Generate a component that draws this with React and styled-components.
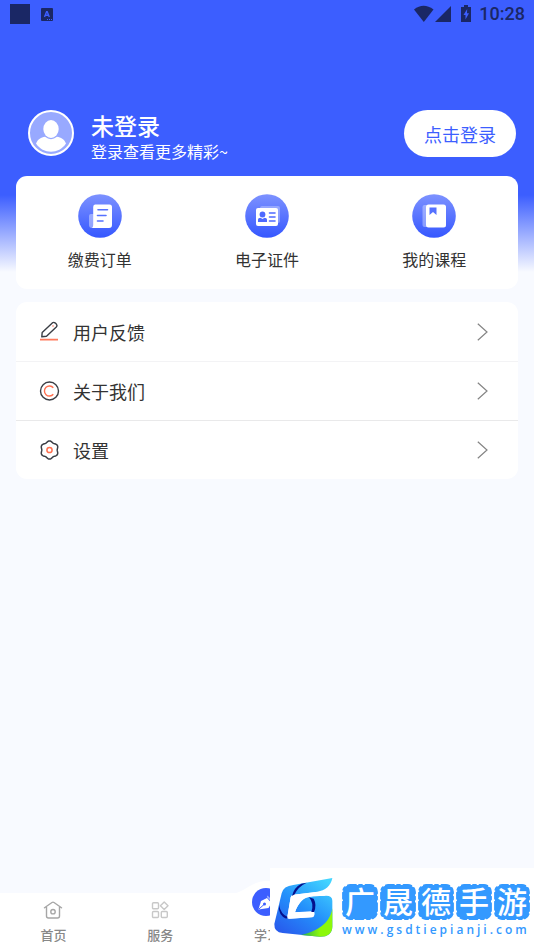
import styled, { createGlobalStyle, css } from 'styled-components'

const GlobalStyle = createGlobalStyle`
  * {
    box-sizing: border-box;
  }

  body {
    margin: 0;
    background-color: #f8faff;
    font-family: "Noto Sans CJK SC", "Noto Sans", sans-serif;
    color: #333;
  }
`

const resetButton = css`
  border: none;
  padding: 0;
  background: none;
  font-family: inherit;
  color: inherit;
  cursor: pointer;
`

// ======================= STYLES =======================

const Page = styled.div`
  display: flex;
  flex-direction: column;
  min-height: 100vh;
  background: linear-gradient(#3c5eff 195px, #f8faff 272px);
`

const StatusBar = styled.div`
  display: flex;
  align-items: center;
  justify-content: space-between;
  height: 28px;
  padding: 0 9px 0 10px;
  color: #1a2765;
`

const StatusGroup = styled.div`
  display: flex;
  align-items: center;
`

const StatusSquare = styled.span`
  width: 20px;
  height: 20px;
  margin-right: 11px;
  background-color: #1a2765;
`

const Clock = styled.time`
  margin-left: 7px;
  font: 500 18px/28px Roboto, sans-serif;
`

const Profile = styled.header`
  display: flex;
  align-items: flex-start;
  padding: 82px 18px 0 28px;
  color: #fff;
`

const ProfileText = styled.div`
  flex: 1;
  margin-left: 17px;
  padding: 2px 0;
`

const Name = styled.h1`
  margin: 0;
  font-size: 23px;
  font-weight: 500;
  line-height: 26px;
`

const Hint = styled.p`
  margin: 0;
  font-size: 16px;
  line-height: 26px;
`

const LoginButton = styled.button`
  ${resetButton}
  height: 47px;
  padding: 0 20px;
  border-radius: 24px;
  background-color: #fff;
  font-size: 18px;
  line-height: 26px;
  color: #3c5eff;
`

const Main = styled.main`
  flex: 1;
  padding: 10px 16px;
`

const Card = styled.section`
  border-radius: 11px;
  background-color: #fff;
  overflow: hidden;
`

const Shortcuts = styled(Card)`
  display: grid;
  grid-template-columns: repeat(3, 1fr);
  margin-bottom: 13px;
  padding: 18px 0;
`

const Shortcut = styled.button`
  ${resetButton}
  display: flex;
  flex-direction: column;
  align-items: center;
  gap: 9px;
  font-size: 16px;
  line-height: 24px;
`

const Row = styled.button`
  ${resetButton}
  display: flex;
  align-items: center;
  width: 100%;
  height: 59px;
  padding: 0 30px 0 23px;
  font-size: 18px;
  text-align: left;

  & + & {
    border-top: 1px solid #f3f3f5;
  }

  & + & + & {
    border-top-color: #e9e9ea;
  }
`

const RowLabel = styled.span`
  flex: 1;
  margin-left: 12px;
`

const TabBar = styled.nav`
  display: grid;
  grid-template-columns: repeat(5, 1fr);
  grid-template-rows: 100%;
  position: sticky;
  bottom: 0;
  height: 57px;
  background-color: #fff;
`

const Tab = styled.a`
  display: flex;
  flex-direction: column;
  align-items: center;
  justify-content: flex-end;
  gap: 6px;
  position: relative;
  padding-bottom: 5px;
  font-size: 13px;
  font-weight: 500;
  line-height: 20px;
  color: #888;
  text-decoration: none;
`

const Bump = styled.svg`
  position: absolute;
  bottom: 56px;
  left: 50%;
  transform: translateX(-50%);
`

const RaisedIcon = styled.span`
  display: flex;
  position: relative;
  margin-bottom: 3px;
`

const Banner = styled.aside`
  position: fixed;
  right: 0;
  bottom: 0;
  display: flex;
  align-items: flex-start;
  width: 264px;
  height: 82px;
  padding-top: 2px;
  background-color: #fff;
`

const BannerText = styled.div`
  display: flex;
  flex-direction: column;
  gap: 1px;
  margin: 13px 0 0 1px;
`

const Tiles = styled.div`
  display: flex;
`

const Tile = styled.span`
  display: grid;
  justify-items: center;
  align-items: start;
  width: 38px;
  height: 38px;
  font-size: 30px;
  line-height: 34px;
  font-weight: 500;
  color: #fff;

  & > * {
    grid-area: 1 / 1;
  }
`

const Site = styled.span`
  padding-left: 1px;
  font: 600 12px/16px "Open Sans", sans-serif;
  letter-spacing: 3px;
  color: #3399ff;
`

// ======================= ICONS =======================

const TranslateIcon = () => (
  <svg width='12' height='13' viewBox='0 0 12 13'>
    <rect width='12' height='13' rx='1' fill='#1a2765' />
    <path d='M3.5 9 L5.6 3.8 H6.2 L8.3 9 M4.3 7.2 H7.5' fill='none' stroke='#3c5eff' strokeWidth='1.4' />
    <path d='M6 11.5 H7 M8 11.5 H9 M10 11.5 H11' stroke='#3c5eff' />
  </svg>
)

const SignalIcons = () => (
  <svg width='58' height='18' viewBox='0 0 58 18' fill='#1a2765'>
    <path d='M0 4.5 Q9.5 -3 19.5 4.5 L9.8 17 Z' />
    <path d='M21 17 L37 1 V17 Z' />
    <path d='M50 0 H54 V2 H57 V17 H47 V2 H50 Z' />
    <path d='M53.2 4 L49.5 10 H51.5 V14.5 L55 8.2 H53 Z' fill='#3c5eff' />
  </svg>
)

const Avatar = () => (
  <svg width='46' height='46' viewBox='0 0 46 46'>
    <circle cx='23' cy='23' r='22' fill='#98a9ff' stroke='#fff' strokeWidth='2' />
    <ellipse cx='23' cy='19' rx='7.7' ry='9' fill='#fff' />
    <path d='M8 33.5 C10 29 13 27.5 17 26.8 Q23 31.5 29 26.8 C33 27.5 36 29 38 33.5 C31 44.5 15 44.5 8 33.5 Z' fill='#fff' />
  </svg>
)

const Badge = ({ id, children }) => (
  <svg width='44' height='44' viewBox='0 0 44 44'>
    <defs>
      <linearGradient id={id} x1='0' y1='0' x2='0' y2='1'>
        <stop offset='0' stopColor='#7d92ff' />
        <stop offset='1' stopColor='#3557ff' />
      </linearGradient>
    </defs>
    <circle cx='22' cy='22' r='21.8' fill={`url(#${id})`} />
    {children}
  </svg>
)

const OrderIcon = () => (
  <Badge id='order'>
    <path d='M13 20 H18 V34 H14 Q11 34 11 31 V22 Q11 20 13 20 Z' fill='#fff' opacity='.4' />
    <path d='M17 10.5 H31.5 Q34 10.5 34 13 V31 Q34 34 31 34 H14 Q15.2 33 15.2 31 V13 Q15.2 10.5 17 10.5 Z' fill='#fff' />
    <path d='M20 15.7 H29.5 M19.5 21.5 H28 M19.5 27 H25' stroke='#5571ff' strokeWidth='1.6' strokeLinecap='round' />
  </Badge>
)

const CardIcon = () => (
  <Badge id='card'>
    <rect x='15' y='12' width='20' height='17' rx='2' fill='#fff' opacity='.3' />
    <rect x='11' y='14' width='22' height='18' rx='2' fill='#fff' />
    <circle cx='17.5' cy='20.5' r='2.9' fill='#4d69ff' />
    <path d='M13 28 V25.5 Q13 24 15.5 23.8 L17.5 25 L19.5 23.8 Q22 24 22 25.5 V28 Z' fill='#4d69ff' />
    <path d='M24.5 19 H30 M24.5 23 H30 M24.5 27 H30' stroke='#4d69ff' strokeWidth='1.6' strokeLinecap='round' />
  </Badge>
)

const CourseIcon = () => (
  <Badge id='course'>
    <rect x='10.5' y='11' width='14' height='22' rx='2' fill='#fff' opacity='.35' />
    <rect x='14' y='10.5' width='20' height='23' rx='2.5' fill='#fff' />
    <path d='M17.5 13.5 H24.5 V21 L21 18 L17.5 21 Z' fill='#5571ff' />
  </Badge>
)

const PenIcon = () => (
  <svg width='22' height='22' viewBox='0 0 22 22' fill='none'>
    <path d='M3.2 11.4 L13.3 1.9 Q14.8 .8 16.3 2.1 L17.3 3.1 Q18.6 4.6 17.3 6 L7.5 15.2 L2.8 15.8 Z' stroke='#3b3e45' strokeWidth='1.4' strokeLinejoin='round' />
    <circle cx='14' cy='5' r='.8' fill='#ff6f4f' />
    <path d='M1 18.6 H19' stroke='#ff7a5c' strokeWidth='1.7' />
  </svg>
)

const CopyrightIcon = () => (
  <svg width='22' height='22' viewBox='0 0 22 22' fill='none'>
    <circle cx='10.5' cy='11' r='9' stroke='#3b3e45' strokeWidth='1.4' />
    <path d='M14.3 7.8 A5 5 0 1 0 14.3 14.2' stroke='#ff6f4f' strokeWidth='1.4' />
  </svg>
)

// six soft lobes, one pointing straight up
const gearPoints = Array.from({ length: 72 }, (_, i) => {
  const angle = (i / 72) * Math.PI * 2
  const radius = 8.4 + 0.7 * Math.cos(angle * 6)
  return `${10.5 + radius * Math.sin(angle)},${11 - radius * Math.cos(angle)}`
}).join(' ')

const GearIcon = () => (
  <svg width='22' height='22' viewBox='0 0 22 22' fill='none'>
    <polygon points={gearPoints} stroke='#3b3e45' strokeWidth='1.5' strokeLinejoin='round' />
    <circle cx='10.5' cy='11' r='2.6' stroke='#ff6f4f' strokeWidth='1.5' />
  </svg>
)

const Chevron = () => (
  <svg width='11' height='18' viewBox='0 0 11 18' fill='none'>
    <path d='M.8 .8 L10 9 L.8 17.2' stroke='#858585' strokeWidth='1.2' />
  </svg>
)

const HomeIcon = () => (
  <svg width='20' height='18' viewBox='0 0 20 18' fill='none' stroke='#a6a6a6' strokeWidth='1.4' strokeLinejoin='round'>
    <path d='M1.5 6.8 L9 1.5 Q10 .8 11 1.5 L18.5 6.8 M3.5 6 V15 Q3.5 17 5.5 17 H14.5 Q16.5 17 16.5 15 V6' strokeLinecap='round' />
    <circle cx='10' cy='10.7' r='2.2' />
  </svg>
)

const ServiceIcon = () => (
  <svg width='18' height='18' viewBox='0 0 18 18' fill='none' stroke='#c8c8c8' strokeWidth='1.4'>
    <rect x='1.5' y='1.8' width='6' height='6' rx='1' />
    <path d='M13.2 .9 L17 4.7 L13.2 8.5 L9.4 4.7 Z' strokeLinejoin='round' />
    <rect x='1.5' y='10.5' width='6' height='6' rx='1' />
    <rect x='10.3' y='10.5' width='6' height='6' rx='1' />
  </svg>
)

const StudyIcon = () => (
  <svg width='30' height='28' viewBox='0 0 30 28'>
    <circle cx='14' cy='14' r='14' fill='#3c5eff' />
    <path d='M6.5 21.5 L9 13 L15 10 L19.5 15 L16.5 20 Z' fill='#fff' />
    <path d='M7 21 L12 16.5' stroke='#3c5eff' />
    <circle cx='12.5' cy='16' r='1.5' fill='#3c5eff' />
    <path d='M15.5 7.5 L22 14 L20.5 15 L14.8 9 Z' fill='#fff' opacity='.5' />
  </svg>
)

const BrandLogo = () => (
  <svg width='70' height='72' viewBox='120 30 210 216'>
    <defs>
      <linearGradient id='brand' x1='.85' y1='0' x2='.15' y2='1'>
        <stop offset='0' stopColor='#42d4ff' />
        <stop offset='.5' stopColor='#2490fb' />
        <stop offset='1' stopColor='#2858ec' />
      </linearGradient>
      <linearGradient id='leaf' x1='0' y1='0' x2='1' y2='0'>
        <stop offset='0' stopColor='#22a958' />
        <stop offset='.6' stopColor='#8cf80a' />
      </linearGradient>
    </defs>
    <path
      d='M307 54 C303 78 285 92 262 95 L190 104 Q184 106 182 112 L172 172 Q172 176 178 176 L244 172 Q252 171 253 162 V155 L195 157 Q200 138 215 122 Q228 110 250 109 L288 107 Q307 107 307 122 V200 Q306 230 270 230 L158 219 Q132 217 133 192 L155 100 Q160 78 190 75 Z'
      fill='url(#brand)'
    />
    <path
      d='M190 104 L262 96 Q276 100 288 107 L250 109 Q228 110 215 122 Q200 138 195 157 L247 154 Q254 155 253 164 Q252 172 244 172 L178 176 Q171 176 172 170 L182 112 Q184 105 190 104 Z'
      fill='#fff'
    />
    <path d='M307 145 C301 190 260 215 213 225 L270 230 Q306 230 307 200 Z' fill='url(#leaf)' />
    <path d='M230 68 L214 71 Q192 82 186 108 L194 103 Q204 80 230 68 Z' fill='#05108c' />
    <path d='M147 134 Q144 166 169 176 L173 171 Q152 162 147 134 Z' fill='#05108c' />
    <path d='M237 112 L251 116 Q261 134 252 156 H244 Q253 130 237 112 Z' fill='#05108c' />
  </svg>
)

const TileShape = () => (
  <svg width='38' height='38' viewBox='0 0 38 38'>
    <rect x='2' y='2' width='34' height='34' rx='7' fill='#3399ff' stroke='#3399ff' strokeWidth='1.8' strokeLinecap='round' strokeDasharray='6 3 3 3.5 8 3' />
  </svg>
)

// ======================= VIEW =======================

const shortcuts = [
  { label: '缴费订单', Icon: OrderIcon },
  { label: '电子证件', Icon: CardIcon },
  { label: '我的课程', Icon: CourseIcon }
]

const rows = [
  { label: '用户反馈', Icon: PenIcon },
  { label: '关于我们', Icon: CopyrightIcon },
  { label: '设置', Icon: GearIcon }
]

const App = () => (
  <>
    <GlobalStyle />
    <Page>
      <StatusBar>
        <StatusGroup>
          <StatusSquare />
          <TranslateIcon />
        </StatusGroup>
        <StatusGroup>
          <SignalIcons />
          <Clock>10:28</Clock>
        </StatusGroup>
      </StatusBar>

      <Profile>
        <Avatar />
        <ProfileText>
          <Name>未登录</Name>
          <Hint>登录查看更多精彩~</Hint>
        </ProfileText>
        <LoginButton>点击登录</LoginButton>
      </Profile>

      <Main>
        <Shortcuts>
          {shortcuts.map(({ label, Icon }) => (
            <Shortcut key={label}>
              <Icon />
              {label}
            </Shortcut>
          ))}
        </Shortcuts>
        <Card>
          {rows.map(({ label, Icon }) => (
            <Row key={label}>
              <Icon />
              <RowLabel>{label}</RowLabel>
              <Chevron />
            </Row>
          ))}
        </Card>
      </Main>

      <TabBar>
        <Tab href='#home'>
          <HomeIcon />
          首页
        </Tab>
        <Tab href='#service'>
          <ServiceIcon />
          服务
        </Tab>
        <Tab href='#study'>
          <Bump width='74' height='14' viewBox='0 0 74 14'>
            <path d='M0 14 C16 13 20 1 37 1 C54 1 58 13 74 14 Z' fill='#fff' />
          </Bump>
          <RaisedIcon><StudyIcon /></RaisedIcon>
          学习
        </Tab>
      </TabBar>

      <Banner>
        <BrandLogo />
        <BannerText>
          <Tiles>
            {[...'广晟德手游'].map((char) => (
              <Tile key={char}>
                <TileShape />
                <span>{char}</span>
              </Tile>
            ))}
          </Tiles>
          <Site>www.gsdtiepianji.com</Site>
        </BannerText>
      </Banner>
    </Page>
  </>
)

export default App
